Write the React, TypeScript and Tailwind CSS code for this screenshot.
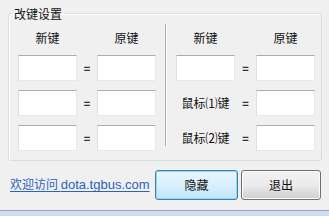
import React from 'react';

const font = { fontFamily: '"Noto Sans CJK SC", "Liberation Sans", sans-serif' };

const Field: React.FC = () => (
  <div className="h-[26px] w-[59px] bg-white border border-t-[#abadb3] border-l-[#dbdfe6] border-r-[#e3e9ef] border-b-[#e3e9ef]" />
);

const Eq: React.FC<{ w: string }> = ({ w }) => (
  <div className={`${w} text-center text-[11px] leading-[26px] font-bold text-[#333]`}>=</div>
);

const Label: React.FC<{ text: string }> = ({ text }) => (
  <div className="w-[59px] text-center text-[12px] leading-[26px] text-[#111]">{text}</div>
);

const App: React.FC = () => {
  return (
    <div className="w-[329px] h-[216px] bg-[#f0f0f0] flex flex-col overflow-hidden" style={font}>
      <fieldset className="ml-[8px] mt-[5px] w-[314px] h-[156px] border border-[#d5dfe5] rounded-[3px] shadow-[inset_1px_1px_0_#ffffff] flex">
        <legend className="ml-[3px] px-[2px] text-[12px] leading-[17px] text-[#111]">改键设置</legend>
        {/* left half */}
        <div className="pl-[9px] pt-[8px] flex flex-col gap-[9px]">
          <div className="flex h-[16px] items-center">
            <div className="w-[59px] text-center text-[12px] text-[#111]">新键</div>
            <div className="w-[20px]" />
            <div className="w-[59px] text-center text-[12px] text-[#111]">原键</div>
          </div>
          {[0, 1, 2].map((i) => (
            <div key={i} className="flex">
              <Field />
              <Eq w="w-[20px]" />
              <Field />
            </div>
          ))}
        </div>
        {/* divider */}
        <div className="ml-[9px] mt-[2px] mb-[5px] w-[2px] border-l border-[#a9b0b6] border-r border-r-white" />
        {/* right half */}
        <div className="pl-[9px] pt-[8px] flex flex-col gap-[9px]">
          <div className="flex h-[16px] items-center">
            <div className="w-[59px] text-center text-[12px] text-[#111]">新键</div>
            <div className="w-[21px]" />
            <div className="w-[59px] text-center text-[12px] text-[#111]">原键</div>
          </div>
          <div className="flex">
            <Field />
            <Eq w="w-[21px]" />
            <Field />
          </div>
          <div className="flex">
            <Label text="鼠标⑴键" />
            <Eq w="w-[21px]" />
            <Field />
          </div>
          <div className="flex">
            <Label text="鼠标⑵键" />
            <Eq w="w-[21px]" />
            <Field />
          </div>
        </div>
      </fieldset>

      <div className="flex items-center mt-[9px] h-[30px]">
        <a className="ml-[10px] text-[12px] text-[#2a62c0] underline underline-offset-2 whitespace-nowrap w-[145px]">
          欢迎访问 <span style={{ fontFamily: '"Liberation Sans", sans-serif' }} className="text-[13px]">dota.tgbus.com</span>
        </a>
        <button className="h-[30px] w-[83px] rounded-[3px] border border-[#3c7fb1] bg-gradient-to-b from-[#eaf6fd] via-[#d9f0fc] to-[#bee6fd] shadow-[inset_0_0_0_1px_#9ad3f3] text-[12px] text-[#111]">
          隐藏
        </button>
        <button className="ml-[3px] h-[30px] w-[80px] rounded-[3px] border border-[#707070] bg-gradient-to-b from-[#f2f2f2] via-[#ebebeb] to-[#cfcfcf] shadow-[inset_0_0_0_1px_#fcfcfc] text-[12px] text-[#111]">
          退出
        </button>
      </div>

      <div className="mt-auto h-[6px] border-t border-[#9aa6b4] bg-[#cddcee]" />
    </div>
  );
};

export default App;
